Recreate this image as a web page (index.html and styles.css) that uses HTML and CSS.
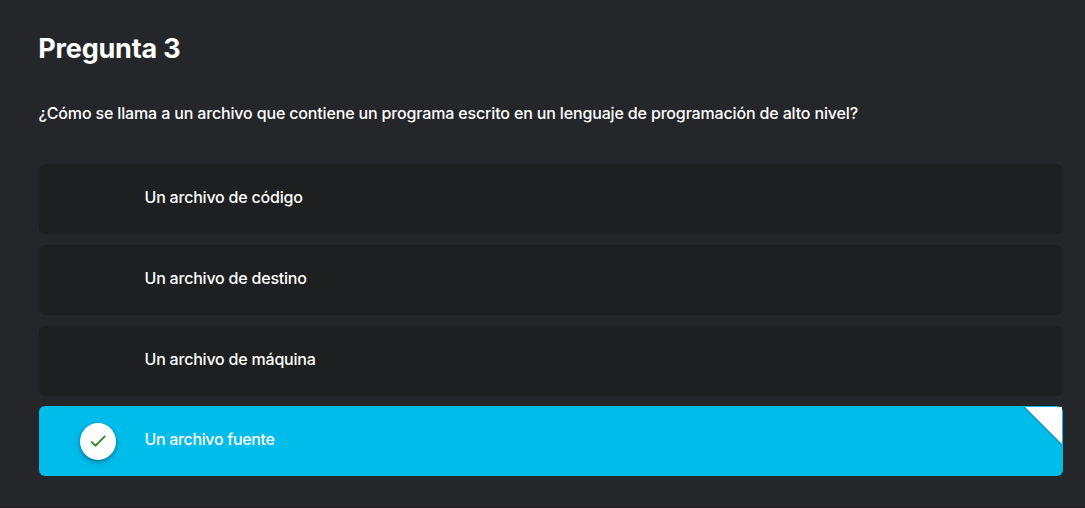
FILE: index.html
```html
<!DOCTYPE html>
<html lang="es">
<head>
<meta charset="utf-8">
<title>Pregunta 3</title>
<link rel="stylesheet" href="styles.css">
</head>
<body>
<main class="quiz">
  <h1 class="title">Pregunta 3</h1>
  <p class="question">¿Cómo se llama a un archivo que contiene un programa escrito en un lenguaje de programación de alto nivel?</p>
  <ul class="options">
    <li class="option"><span class="marker"></span><span class="label">Un archivo de código</span></li>
    <li class="option"><span class="marker"></span><span class="label">Un archivo de destino</span></li>
    <li class="option"><span class="marker"></span><span class="label">Un archivo de máquina</span></li>
    <li class="option selected"><span class="marker"><span class="badge"><svg class="check" viewBox="0 0 18 18"><path d="M2.2 9.6 6.5 13.7 16.3 3.9"/></svg></span></span><span class="label">Un archivo fuente</span>
      <svg class="corner" viewBox="0 0 40 40"><path class="fold-edge" d="M0 1H39V40Z"/><path class="fold" d="M2 1H39V38Z"/></svg></li>
  </ul>
</main>
</body>
</html>
```
FILE: styles.css
```css
* { box-sizing: border-box; }
body { margin: 0; background: #25262a; color: #fff; font-family: Inter, sans-serif; height: 508px; overflow: hidden; border-bottom: 1px solid #211f23; }
.quiz { padding: 32px 22px 0 39px; }
.title { margin: 0 0 0 -0.7px; font-size: 27px; line-height: 34px; font-weight: 750; letter-spacing: -0.2px; }
.question { margin: 35px 0 0 -0.5px; font-size: 16px; line-height: 24px; font-weight: 500; letter-spacing: -0.155px; white-space: nowrap; }
.options { list-style: none; margin: 39px 0 0; padding: 0; display: grid; grid-template-rows: repeat(4, 70px); row-gap: 10.75px; }
.option { position: relative; display: flex; align-items: center; background: #1e1f21; border-radius: 6px; padding-bottom: 4px; }
.marker { width: 105.5px; padding-left: 41px; }
.label { font-size: 16px; line-height: 24px; font-weight: 500; letter-spacing: -0.21px; }
.selected { background: #00bceb; }
.selected .label { letter-spacing: -0.34px; }
.badge { display: flex; align-items: center; justify-content: center; width: 36px; height: 37px; border-radius: 50%; background: #fff; margin-top: 4px; box-shadow: 0 2px 5px rgba(0,0,0,.4); }
.check { width: 18px; height: 18px; fill: none; stroke: #2a8a2a; stroke-width: 1.8; }
.corner { position: absolute; top: 0; right: 0; width: 40px; height: 40px; }
.fold-edge { fill: #1596b5; }
.fold { fill: #fff; }
```
